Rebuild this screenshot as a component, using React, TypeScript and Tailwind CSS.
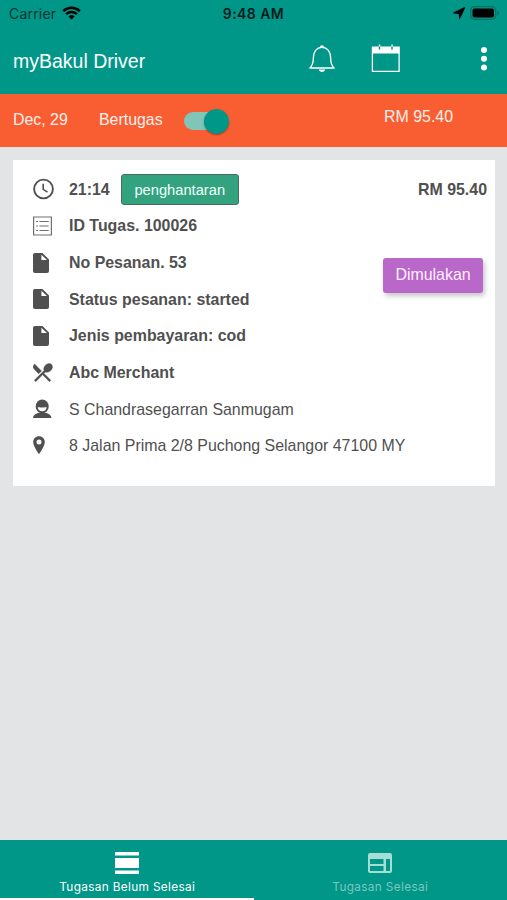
import type { ReactNode } from "react";

const FileIcon = () => (
  <svg width="16" height="20" viewBox="0 0 16 20">
    <path fill="currentColor" fillRule="evenodd" d="M2 0h7.500L16 6.500V18a2 2 0 0 1-2 2H2a2 2 0 0 1-2-2V2a2 2 0 0 1 2-2zM8.400 1.700V7h5.600z" />
  </svg>
);

const ClockIcon = () => (
  <svg width="22" height="22" viewBox="0 0 22 22" fill="none" stroke="currentColor">
    <circle cx="10.500" cy="11" r="9.400" strokeWidth="1.900" />
    <path d="M10.200 5.800v5.600l4.300 2.700" strokeWidth="1.600" />
  </svg>
);

const ListIcon = () => (
  <svg width="20" height="20" viewBox="0 0 20 20" fill="none" stroke="#707070">
    <path d="M.6 1h17.800v18H.6z" strokeWidth="1.200" />
    <path d="M3.200 5.500H5m1.400 0h9.300M3.200 10H5m1.400 0h9.300M3.200 14.500H5m1.400 0h9.300" strokeWidth="1.100" />
  </svg>
);

const FoodIcon = () => (
  <svg width="22" height="22" viewBox="0 0 22 22" fill="currentColor" stroke="currentColor" strokeWidth=".4">
    <path d="m8.100 13.340 2.830-2.830L3.910 3.500a4.008 4.008 0 0 0 0 5.660l4.190 4.180zm6.780-1.810c1.530.71 3.680.21 5.270-1.380 1.910-1.910 2.280-4.650.81-6.120-1.460-1.460-4.200-1.100-6.120.81-1.590 1.590-2.090 3.740-1.380 5.270L3.700 19.870l1.410 1.410L12 14.410l6.880 6.880 1.410-1.410L13.410 13l1.470-1.470z" transform="translate(-2.400 -1.600)" />
  </svg>
);

const PersonIcon = () => (
  <svg width="20" height="20" viewBox="0 0 20 20">
    <path fill="currentColor" d="M0 19c.2-3.200 2.800-4.600 6-5.300h6.400c3.200.7 5.800 2.100 6 5.300z" />
    <ellipse cx="9.200" cy="7.400" rx="6.500" ry="7" fill="currentColor" />
    <path fill="#fff" d="M4.800 8c1 .6 7.800.6 8.800 0 0 2.700-1.900 4.300-4.400 4.300S4.800 10.700 4.800 8z" />
  </svg>
);

const PinIcon = () => (
  <svg width="13" height="19" viewBox="0 0 13 19">
    <path fill="currentColor" fillRule="evenodd" d="M6 .3C2.600.3.200 2.800.200 6.100.200 10.500 6 18.300 6 18.300s5.800-7.800 5.800-12.200C11.800 2.800 9.400.3 6 .3zm0 3.300a2.500 2.500 0 1 1 0 5 2.500 2.500 0 0 1 0-5z" />
  </svg>
);

const BellIcon = () => (
  <svg width="28" height="30" viewBox="0 0 28 30" fill="none" stroke="white">
    <path d="M1.800 24C4.600 21.500 5.300 19.500 5.300 14.500 5.300 8 8.500 3.300 14 3.300s8.700 4.700 8.700 11.200c0 5 .7 7 3.500 9.500z" strokeWidth="1.300" strokeLinejoin="round" />
    <path d="M12 3a2 1.800 0 0 1 4 0zM10.800 25.400h6.400c-.4 3.300-6 3.300-6.400 0z" fill="white" stroke="none" />
  </svg>
);

const CalendarIcon = () => (
  <svg width="30" height="30" viewBox="0 0 30 30">
    <path d="M1.400 9v18.400h26.700V9" fill="none" stroke="white" strokeWidth="1.300" />
    <path d="M.8 2.500h28V9.500H.8zM7.800.6h1.500v2H7.800zM20.300.6h1.500v2h-1.500z" fill="white" />
    <path d="M8.500 2.500v3M21 2.500v3" stroke="#009688" strokeWidth="1.500" />
  </svg>
);

const StatusBar = () => (
  <div className="grid h-7 grid-cols-3 items-center px-[9px] font-['Inter','Liberation_Sans',sans-serif] text-black">
    <div className="flex items-center gap-[6px]">
      <span className="text-[14px] tracking-[0.200px] text-[#05322f]">Carrier</span>
      <svg width="19" height="14" viewBox="0 0 19 14" fill="none" stroke="currentColor" strokeWidth="2.500" className="-mt-[2px]">
        <path d="M1.200 5.200a12 12 0 0 1 16.600 0M4.100 8.200a8 8 0 0 1 10.800 0" />
        <path d="m9.500 13.500-3-3a4.300 4.300 0 0 1 6 0z" fill="currentColor" stroke="none" />
      </svg>
    </div>
    <span className="text-center text-[14px] font-semibold tracking-[0.450px] text-[#021c1a]">9:48 AM</span>
    <div className="-mr-[2px] flex items-center justify-end gap-[4px] pb-[2px]">
      <svg width="13" height="12" viewBox="0 0 13 12">
        <path d="M11.500.9 1 5.900l5.200.5.500 4.700z" fill="currentColor" stroke="currentColor" strokeWidth="1.200" strokeLinejoin="round" />
      </svg>
      <svg width="30" height="14" viewBox="0 0 30 14">
        <rect x=".7" y=".7" width="25" height="12.600" rx="3.600" fill="none" stroke="#087264" strokeWidth="1.300" />
        <rect x="2.500" y="2.500" width="21.500" height="9" rx="2" fill="currentColor" />
        <path d="M27.200 4.500c2.400 1 2.400 4 0 5z" fill="#087264" />
      </svg>
    </div>
  </div>
);

const Row = ({ icon, children }: { icon: ReactNode; children: ReactNode }) => (
  <li className="flex h-[36.700px] items-center">
    <span className="flex w-[36px] shrink-0 items-center pb-px">{icon}</span>
    {children}
  </li>
);

export default function App() {
  return (
    <div className="flex h-[900px] w-[507px] flex-col overflow-hidden bg-[#e2e4e6] font-['Liberation_Sans',Arial,sans-serif] text-[16px] leading-5">
      <header className="h-[94px] shrink-0 bg-[#009688] text-white">
        <StatusBar />
        <div className="flex h-[66px] items-center pl-[13px] pr-[19px]">
          <h1 className="text-[19.500px]">myBakul Driver</h1>
          <div className="ml-auto flex items-center pb-[5px]">
            <BellIcon />
            <span className="ml-[35px]"><CalendarIcon /></span>
            <svg width="8" height="26" viewBox="0 0 8 26" fill="white" className="ml-[79px]">
              <circle cx="4" cy="4" r="3" />
              <circle cx="4" cy="12.700" r="3" />
              <circle cx="4" cy="21.400" r="3" />
            </svg>
          </div>
        </div>
      </header>

      <div className="flex h-[53px] shrink-0 items-center bg-[#f95e33] px-[13px] pb-[2px] text-[15.900px] text-[#fff0eb]">
        <span className="w-[86px]">Dec, 29</span>
        <span className="w-[85px]">Bertugas</span>
        <span className="mt-[3px] flex h-[18px] w-[45px] items-center justify-end rounded-full bg-[#80c5b8]">
          <span className="h-[25px] w-[25px] shrink-0 rounded-full bg-[#009688] shadow-[0_1px_2px_rgba(0,0,0,0.35)]" />
        </span>
        <span className="mb-[5px] ml-auto mr-[41px]">RM 95.40</span>
      </div>

      <main className="grow pl-[13px] pr-[12px] pt-[13px]">
        <section className="flex h-[326px] bg-white pl-[20px] pr-[8px] pt-[11.300px] text-[15.930px] text-[#505050]">
          <ul className="grow font-bold">
            <Row icon={<ClockIcon />}>
              <span>21:14</span>
              <span className="ml-[11px] flex h-[31px] w-[118px] items-center justify-center rounded-[3px] border border-[#4b6b5f] bg-[#33a37f] text-[14.700px] font-normal text-[#f0fff9]">penghantaran</span>
            </Row>
            <Row icon={<ListIcon />}>ID Tugas. 100026</Row>
            <Row icon={<FileIcon />}>No Pesanan. 53</Row>
            <Row icon={<FileIcon />}>Status pesanan: started</Row>
            <Row icon={<FileIcon />}>Jenis pembayaran: cod</Row>
            <Row icon={<FoodIcon />}>Abc Merchant</Row>
            <Row icon={<PersonIcon />}><span className="font-normal">S Chandrasegarran Sanmugam</span></Row>
            <Row icon={<PinIcon />}><span className="whitespace-nowrap font-normal">8 Jalan Prima 2/8 Puchong Selangor 47100 MY</span></Row>
          </ul>
          <div className="-ml-[30px] flex w-[105px] shrink-0 flex-col items-end">
            <span className="mt-[8.700px] whitespace-nowrap font-bold">RM 95.40</span>
            <button className="mr-[4px] mt-[58px] h-[35px] w-[100px] rounded-[3px] bg-[#b967c9] text-[#fff0ff] shadow-[2px_3px_5px_rgba(0,0,0,0.22)]">Dimulakan</button>
          </div>
        </section>
      </main>

      <nav className="grid h-[60px] shrink-0 grid-cols-2 bg-[#009688] font-['Inter','Liberation_Sans',sans-serif] text-[11.800px] leading-4 tracking-[0.350px]">
        <div className="relative flex flex-col items-center pt-[11px] text-white">
          <svg width="24" height="24" viewBox="0 0 24 24" fill="currentColor">
            <path d="M0 1h24v3.500H0zM0 7h24v10H0zM0 19.500h24V23H0z" />
          </svg>
          <span className="mt-[4px] pl-px">Tugasan Belum Selesai</span>
          <span className="absolute bottom-0 left-0 h-[2px] w-full bg-white" />
        </div>
        <div className="flex flex-col items-center pt-[11px] text-[#79c8c0]">
          <svg width="26" height="24" viewBox="0 0 26 24">
            <path fill="#a5ddd7" fillRule="evenodd" d="M3 2h20a2 2 0 0 1 2 2v16a2 2 0 0 1-2 2H3a2 2 0 0 1-2-2V4a2 2 0 0 1 2-2zM3 8v5h13.500V8zm0 7v5h13.500v-5zM19 8v12h4V8z" />
          </svg>
          <span className="mt-[4px]">Tugasan Selesai</span>
        </div>
      </nav>
    </div>
  );
}
